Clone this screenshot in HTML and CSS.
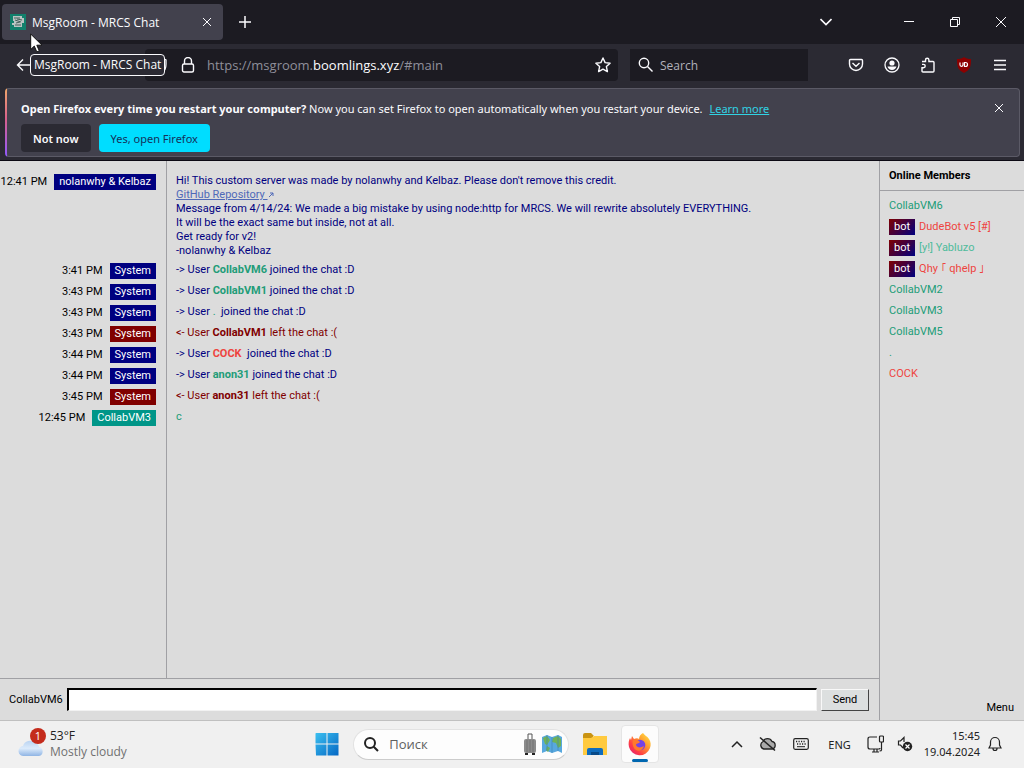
FILE: index.html
```
<!DOCTYPE html>
<html lang="en">
<head>
<meta charset="utf-8">
<title>MsgRoom - MRCS Chat</title>
<link rel="stylesheet" href="styles.css">
</head>
<body>
<div class="desktop">
  <header class="browser">
    <div class="tabs">
      <div class="tab">
        <svg class="favicon" width="16" height="16" viewBox="0 0 16 16"><path fill="#12806c" d="M0 0h16v16H0z"/><path fill="#b9c4c2" d="M3 2h9v2h2v5h-2v4H4v-2H2V9h2V7H3z"/><path d="M4 4h6M5 6l6 2M5 11l6 0M7 5l5 1M6 9l4-1" stroke="#46605c"/></svg>
        <span class="tab-title">MsgRoom - MRCS Chat</span>
        <button class="icon-btn" aria-label="Close tab"><svg width="10" height="10" viewBox="0 0 10 10"><path d="M1 1l8 8M9 1L1 9"/></svg></button>
      </div>
      <button class="icon-btn new-tab" aria-label="New tab"><svg width="12" height="12" viewBox="0 0 12 12"><path d="M6 0v12M0 6h12" stroke-width="1.5"/></svg></button>
      <div class="window-controls">
        <button class="icon-btn list-tabs" aria-label="List all tabs"><svg width="12" height="8" viewBox="0 0 12 8"><path d="M0.500 1l5.500 5.500L11.500 1" stroke-width="1.600"/></svg></button>
        <button class="icon-btn control" aria-label="Minimize"><svg width="10" height="10" viewBox="0 0 10 10"><path d="M0 4.500h10"/></svg></button>
        <button class="icon-btn control" aria-label="Restore"><svg width="10" height="10" viewBox="0 0 10 10"><path d="M.5 2.500h7v7h-7zM2.500 2V.5h7v7H8"/></svg></button>
        <button class="icon-btn control" aria-label="Close window"><svg width="10" height="10" viewBox="0 0 10 10"><path d="M0 0l10 10M10 0L0 10"/></svg></button>
      </div>
    </div>
    <div class="toolbar">
      <button class="icon-btn back" aria-label="Back"><svg width="16" height="14" viewBox="0 0 16 14"><path d="M16 7H1.500M7 1.500L1.500 7 7 12.500" stroke-width="1.400"/></svg></button>
      <div class="address">
        <svg width="14" height="16" viewBox="0 0 14 16"><path d="M7 1l4 2v4c0 4-1 7-4 8-3-1-6-4-6-8V3z" stroke-width="1.300"/></svg>
        <svg width="14" height="16" viewBox="0 0 14 16"><rect x="1.500" y="7" width="11" height="8" rx="1.500" stroke-width="1.400"/><path d="M3.500 7V4a3.500 3.500 0 0 1 7 0v3" stroke-width="1.400"/></svg>
        <span class="url">https://msgroom.<b>boomlings.xyz</b>/#main</span>
        <button class="icon-btn" aria-label="Bookmark"><svg width="16" height="16" viewBox="0 0 16 16"><path d="M8 1l2.100 4.600 5 .6-3.700 3.400 1 5L8 12.100l-4.400 2.500 1-5L.9 6.200l5-.6z" stroke-width="1.400" stroke-linejoin="round"/></svg></button>
      </div>
      <label class="web-search">
        <svg width="16" height="16" viewBox="0 0 16 16"><circle cx="6" cy="6" r="4.700" stroke-width="1.400"/><path d="M9.500 9.500l5 5" stroke-width="1.400"/></svg>
        <input type="text" placeholder="Search" aria-label="Search the web">
      </label>
      <div class="tools">
        <button class="icon-btn" aria-label="Pocket"><svg width="16" height="16" viewBox="0 0 16 16"><path d="M2.500 2.500h11q1 0 1 1V7a6.500 6.500 0 0 1-13 0V3.500q0-1 1-1zM4.500 6L8 9.200 11.500 6" stroke-width="1.400"/></svg></button>
        <button class="icon-btn" aria-label="Account"><svg width="16" height="16" viewBox="0 0 16 16"><circle cx="8" cy="8" r="7" stroke-width="1.300"/><circle cx="8" cy="6" r="2.600" fill="#fbfbfe" stroke="none"/><path d="M3.500 9.500h9A5 5 0 0 1 8 13a5 5 0 0 1-4.500-3.500z" fill="#fbfbfe" stroke="none"/></svg></button>
        <button class="icon-btn" aria-label="Extensions"><svg width="16" height="16" viewBox="0 0 16 16"><path d="M2 4.500h3.500V3a1.700 1.700 0 0 1 3.400 0v1.500H13q1 0 1 1V14q0 1-1 1H3q-1 0-1-1v-3.200h1.500a1.700 1.700 0 0 0 0-3.400H2" stroke-width="1.400"/></svg></button>
        <button class="icon-btn" aria-label="uBlock Origin"><svg width="16" height="16" viewBox="0 0 16 16"><path d="M8 0c2 1.500 4 2 7 2 0 8-1 11-7 14C2 13 1 10 1 2c3 0 5-.5 7-2z" fill="#8c0000" stroke="none"/><path d="M4 5.500v2.300a1.500 1.500 0 0 0 3 0V5.500M8.500 5.500h1a2 2 0 0 1 0 4h-1z" stroke-width="1.200"/></svg></button>
        <button class="icon-btn" aria-label="Application menu"><svg width="12" height="12" viewBox="0 0 12 12"><path d="M0 1.500h12M0 6h12M0 10.500h12" stroke-width="1.300"/></svg></button>
      </div>
    </div>
    <div class="notice">
      <div class="notice-body">
        <p><strong>Open Firefox every time you restart your computer?</strong> Now you can set Firefox to open automatically when you restart your device. <a href="#learn">Learn more</a></p>
        <div class="notice-actions"><button class="btn">Not now</button><button class="btn primary">Yes, open Firefox</button></div>
      </div>
      <button class="icon-btn notice-close" aria-label="Dismiss"><svg width="8" height="8" viewBox="0 0 8 8"><path d="M0 0l8 8M8 0L0 8"/></svg></button>
    </div>
    <div class="tooltip">MsgRoom - MRCS Chat</div>
    <svg class="pointer" width="13" height="20" viewBox="0 0 13 20"><path d="M.7 1v15.500l3.600-3.400 2.500 5.800 2.500-1.100-2.500-5.600h5.200z" fill="#fff" stroke="#111" stroke-width="1"/></svg>
  </header>

  <main class="chat">
    <section class="room">
      <div class="messages">
        <div class="meta"><time>12:41 PM</time><span class="author">nolanwhy &amp; Kelbaz</span></div>
        <div class="text">Hi! This custom server was made by nolanwhy and Kelbaz. Please don't remove this credit.<br><a href="#repo">GitHub Repository <svg width="6" height="6" viewBox="0 0 6 6"><path d="M1 5l4-4M2 1h3v3"/></svg></a><br>Message from 4/14/24: We made a big mistake by using node:http for MRCS. We will rewrite absolutely EVERYTHING.<br>It will be the exact same but inside, not at all.<br>Get ready for v2!<br>-nolanwhy &amp; Kelbaz</div>
        <div class="meta"><time>3:41 PM</time><span class="author">System</span></div>
        <div class="text">-&gt; User <b class="green">CollabVM6</b> joined the chat :D</div>
        <div class="meta"><time>3:43 PM</time><span class="author">System</span></div>
        <div class="text">-&gt; User <b class="green">CollabVM1</b> joined the chat :D</div>
        <div class="meta"><time>3:43 PM</time><span class="author">System</span></div>
        <div class="text">-&gt; User <span class="green">.</span>&nbsp; joined the chat :D</div>
        <div class="meta"><time>3:43 PM</time><span class="author left">System</span></div>
        <div class="text left">&lt;- User <b>CollabVM1</b> left the chat :(</div>
        <div class="meta"><time>3:44 PM</time><span class="author">System</span></div>
        <div class="text">-&gt; User <b class="red">COCK</b>&nbsp; joined the chat :D</div>
        <div class="meta"><time>3:44 PM</time><span class="author">System</span></div>
        <div class="text">-&gt; User <b class="green">anon31</b> joined the chat :D</div>
        <div class="meta"><time>3:45 PM</time><span class="author left">System</span></div>
        <div class="text left">&lt;- User <b>anon31</b> left the chat :(</div>
        <div class="meta"><time>12:45 PM</time><span class="author user">CollabVM3</span></div>
        <div class="text green">c</div>
      </div>
      <form class="composer">
        <label for="message">CollabVM6</label>
        <input id="message" type="text">
        <button type="button">Send</button>
      </form>
    </section>
    <aside class="members">
      <h2>Online Members</h2>
      <ul>
        <li class="green">CollabVM6</li>
        <li class="red"><span class="bot">bot</span>DudeBot v5 [#]</li>
        <li class="mint"><span class="bot">bot</span>[y!] Yabluzo</li>
        <li class="red"><span class="bot">bot</span>Qhy ｢ qhelp ｣</li>
        <li class="green">CollabVM2</li>
        <li class="green">CollabVM3</li>
        <li class="green">CollabVM5</li>
        <li class="green">.</li>
        <li class="red">COCK</li>
      </ul>
      <button class="menu">Menu</button>
    </aside>
  </main>

  <footer class="taskbar">
    <div class="weather">
      <svg width="29" height="30" viewBox="0 0 29 30"><defs><linearGradient id="cl" x2="0" y2="1"><stop stop-color="#b9d3f1"/><stop offset=".5" stop-color="#dcebfb"/><stop offset="1" stop-color="#8fb4e4"/></linearGradient></defs><path d="M6 28a5 5 0 0 1-1-10 7 7 0 0 1 12-3 5 5 0 0 1 4 4 4.600 4.600 0 0 1 0 9z" fill="url(#cl)"/><circle cx="20" cy="8" r="8" fill="#c42b1c"/><text x="20" y="12" class="count">1</text></svg>
      <div class="weather-text"><div>53°F</div><div class="sky">Mostly cloudy</div></div>
    </div>
    <nav class="apps">
      <button class="icon-btn" aria-label="Start"><svg width="24" height="24" viewBox="0 0 24 24"><defs><linearGradient id="wn" x2="1" y2="1"><stop stop-color="#3cc0f0"/><stop offset="1" stop-color="#0467c4"/></linearGradient></defs><path fill="url(#wn)" stroke="none" d="M1 1h10.500v10.500H.5V1.500zM12.500 1h11v10.500h-11zM.5 12.500h11v11H1zM12.500 12.500h11v11h-11z"/></svg></button>
      <label class="task-search">
        <svg class="lens" width="15" height="15" viewBox="0 0 15 15"><circle cx="6" cy="6" r="5"/><path d="M9.700 9.700L14 14"/></svg>
        <input type="text" placeholder="Поиск" aria-label="Поиск">
        <svg width="40" height="22" viewBox="0 0 40 22"><path d="M5 6V1h4v5" fill="none" stroke="#555"/><rect x="1" y="6" width="12" height="14" rx="2" fill="#8c8c8c"/><path d="M4 7v12M7 7v12M10 7v12" stroke="#737373"/><path d="M2 20h3v2H2zM9 20h3v2H9z" fill="#222"/><path d="M19 4l5-2 5 2 6-2 4 2v16l-4-2-6 2-5-2-5 2z" fill="#58a8de"/><path d="M20 5l4-2 3 4-3 5-2-1zM24 13l3 2-2 4-2-2zM30 5l5-2 3 3v7l-3 2-2-5-4-1z" fill="#6fb257"/><path d="M24 2v16M29 4v16M35 2v16" stroke="#3d82b5" stroke-width=".6"/></svg>
      </label>
      <button class="icon-btn" aria-label="File Explorer"><svg width="24" height="22" viewBox="0 0 24 22"><path d="M0 2q0-2 2-2h6l3 3h-1v3H0z" fill="#c99312" stroke="none"/><path d="M0 5h8l3-2h13v19H0z" fill="#ffca3f" stroke="none"/><path d="M4 22v-5q0-2 2-2h12q2 0 2 2v5z" fill="#0f6cbd" stroke="none"/><path d="M8 19h8v3H8z" fill="#084a88" stroke="none"/></svg></button>
      <button class="icon-btn running" aria-label="Firefox"><svg width="24" height="24" viewBox="0 0 24 24"><defs><linearGradient id="fx" x1="1" x2="0" y2="1"><stop stop-color="#fff04b"/><stop offset=".35" stop-color="#ffa02f"/><stop offset=".7" stop-color="#ff3d45"/><stop offset="1" stop-color="#d71887"/></linearGradient></defs><path d="M4 4l2 3c2-1 4-1 5 0 0-3 2-5 4-6 1 2 4 3 6 6 2 3 2 6 1 9a11 11 0 0 1-21-1C0 11 1 8 2 6l1 2z" fill="url(#fx)" stroke="none"/><circle cx="12" cy="13" r="5.300" fill="#7542e5" stroke="none"/><path d="M5 8c3-1 5 0 7 2-1 2-4 1-4 3 1 3 5 3 8 1-1 4-5 6-8 4-3-2-4-6-3-10z" fill="#ff792c" stroke="none"/></svg></button>
    </nav>
    <div class="tray">
      <button class="icon-btn" aria-label="Show hidden icons"><svg width="12" height="8" viewBox="0 0 12 8"><path d="M1 7l5-5 5 5" stroke-width="1.500"/></svg></button>
      <svg width="18" height="16" viewBox="0 0 18 16"><path d="M5 13a4 4 0 0 1-1-7.500 5 5 0 0 1 9 0A3.800 3.800 0 0 1 13 13z" fill="#aaa" stroke-width="1.300"/><path d="M1 1.500l15 13" stroke-width="1.600"/></svg>
      <svg width="16" height="12" viewBox="0 0 16 12"><rect x=".7" y=".7" width="14.600" height="10.600" rx="1.500" stroke-width="1.200"/><path d="M3 3.500h10M4 6h9" stroke-dasharray="1.200 1.300" stroke-width="1.300"/><path d="M4 8.700h8"/></svg>
      <span class="lang">ENG</span>
      <svg width="17" height="18" viewBox="0 0 17 18"><path d="M10 2H3Q1 2 1 4v8q0 2 2 2h9q1 0 1-1M5 17h7M7 14v3M10 14v3M14.500 7v8q0 1-2 1" stroke-width="1.200"/><rect x="12.500" y="1" width="4" height="6" rx="1" stroke-width="1.200"/></svg>
      <svg width="16" height="16" viewBox="0 0 16 16"><path d="M6 12L3.500 9H1.500V5h2L7 1.500V6" stroke-width="1.200"/><circle cx="10.500" cy="10.500" r="4.700" fill="#222" stroke="none"/><path d="M8.500 8.500l4 4M12.500 8.500l-4 4" stroke="#fff" stroke-width="1.200"/></svg>
      <div class="clock"><div>15:45</div><div>19.04.2024</div></div>
      <button class="icon-btn bell" aria-label="Notifications"><svg width="14" height="16" viewBox="0 0 14 16"><path d="M1 12l1.500-3V6a4.500 4.500 0 0 1 9 0v3l1.500 3zM5 12.500a2 2 0 0 0 4 0" stroke-width="1.200"/></svg></button>
    </div>
  </footer>
</div>
</body>
</html>
```
FILE: styles.css
```
* { box-sizing: border-box; }
body { margin: 0; font-family: "Open Sans", "Noto Sans", sans-serif; font-size: 12px; }
button, input { font: inherit; color: inherit; border: 0; padding: 0; background: none; }
input { min-width: 0; outline: 0; }
svg { flex: none; fill: none; stroke: none; }
.desktop { display: flex; flex-direction: column; min-height: 100vh; }

.icon-btn { display: flex; align-items: center; justify-content: center; flex: none; }
.icon-btn svg { stroke: currentColor; }

.browser { position: relative; background: #2b2a33; color: #fbfbfe; border-bottom: 1px solid #0c0a14; }
.tabs { display: flex; align-items: center; height: 44px; padding-left: 2px; background: #1c1b22; }
.tab { display: flex; align-items: center; gap: 6px; width: 221px; height: 36px; padding: 0 11px 0 8px; border-radius: 4px; background: #42414d; }
.tab-title { flex: 1; }
.new-tab { width: 44px; height: 36px; }
.window-controls { display: flex; align-items: center; margin-left: auto; }
.list-tabs { width: 36px; height: 36px; margin-right: 42px; }
.control { width: 46px; height: 44px; }

.toolbar { display: flex; align-items: center; height: 44px; padding: 0 18px 2px 15px; }
.back { width: 18px; height: 32px; }
.address { display: flex; align-items: center; flex: 1; gap: 12px; height: 32px; margin-left: 112px; padding: 0 7px 0 10px; border-radius: 4px; background: #1c1b22; }
.address > svg, .web-search svg { stroke: #fbfbfe; }
.url { flex: 1; color: #8f8f9a; font-size: 13px; }
.url b { color: #fbfbfe; font-weight: 400; }
.web-search { display: flex; align-items: center; gap: 6px; width: 178px; height: 32px; margin-left: 12px; padding-left: 8px; background: #1c1b22; }
.web-search input { width: 120px; }
.web-search input::placeholder { color: #b2b2bb; opacity: 1; }
.tools { display: flex; align-items: center; gap: 20px; margin-left: 40px; }
.tools button:last-child { margin-left: 2px; }

.notice { display: flex; align-items: flex-start; margin: 0 4px 3px 5px; padding: 11px 16px 4px 14px; border: 1px solid transparent; border-left-width: 2px; border-radius: 4px; background: linear-gradient(#42414d, #42414d) padding-box, linear-gradient(90deg, transparent 2px, #5b5a66 2px) border-box, linear-gradient(#f0a86a, #d8608c 45%, #9059ff) border-box; font-family: "Noto Sans", sans-serif; font-size: 11px; }
.notice-body { flex: 1; }
.notice p { margin: 0 0 7px; line-height: 17px; }
.notice a { margin-left: 4px; color: #31d2e4; }
.notice-actions { display: flex; gap: 8px; }
.btn { height: 28px; padding: 0 12px; border-radius: 4px; background: #2b2a33; font-weight: 600; }
.primary { background: #00ddff; color: #15305a; font-weight: 400; }
.notice-close { margin-top: 4px; }
.tooltip { position: absolute; left: 30px; top: 54px; padding: 0 3px; border: 1px solid #fbfbfe; border-radius: 4px; background: #2b2a33; line-height: 20px; }
.pointer { position: absolute; left: 30px; top: 33px; }

.chat { display: flex; flex: 1; background: #dcdcdc; font-family: Roboto, "Liberation Sans", sans-serif; font-size: 11px; line-height: 14px; color: #000; border-bottom: 1px solid #c0c0c0; }
.room { display: flex; flex-direction: column; flex: 1; }
.messages { display: grid; grid-template-columns: 167px 1fr; grid-auto-rows: min-content; row-gap: 5px; flex: 1; padding-top: 13px; background: linear-gradient(#a0a0a4, #a0a0a4) 166px 0 / 1px 100% no-repeat; }
.meta { display: flex; align-items: flex-start; justify-content: flex-end; gap: 7px; min-height: 16px; padding-right: 11px; line-height: 16px; white-space: nowrap; }
.author { padding: 0 5px; background: #000080; color: #fff; }
.author.left { background: #800000; }
.author.user { background: #009688; }
.text { padding-left: 9px; color: #000080; }
.text.left { color: #800000; }
.text a { color: #4f69b8; }
.text a svg { stroke: #4f69b8; }
.green, .text.green { color: #229c78; }
.red { color: #ee4440; }
.mint { color: #4fbb9b; }
.composer { display: flex; align-items: center; gap: 4px; padding: 9px 10px 9px 9px; border-top: 1px solid #a0a0a4; }
.composer input { flex: 1; height: 23px; padding: 0 4px; background: #fff; border: 1px solid #f2f2f2; border-top: 2px solid #000; border-left: 2px solid #000; }
.composer button { width: 48px; height: 22px; background: #dcdfdf; border: 1px solid; border-color: #f8f8f8 #444 #444 #f8f8f8; }
.members { display: flex; flex-direction: column; width: 145px; border-left: 1px solid #a0a0a4; }
.members h2 { margin: 0; padding: 8px 9px 7px; border-bottom: 1px solid #a0a0a4; font-size: 11px; font-weight: 700; }
.members ul { margin: 0; padding: 4px 0 0 9px; list-style: none; }
.members li { display: flex; align-items: center; gap: 4px; height: 21px; white-space: nowrap; }
.bot { padding: 1px 5px; background: linear-gradient(135deg, #800000, #000080); color: #fff; }
.menu { align-self: flex-end; margin: auto 10px 5px 0; }

.taskbar { display: flex; align-items: center; height: 47px; padding: 0 21px 1px 18px; background: #f0f0f0; color: #222; }
.weather { display: flex; align-items: center; flex: 1; gap: 3px; }
.weather > svg { align-self: flex-start; }
.weather-text, .clock { line-height: 16px; }
.sky { color: #707070; }
.count { fill: #fff; font-size: 11px; text-anchor: middle; }
.apps { display: flex; align-items: center; gap: 14px; margin-right: 70px; }
.task-search { display: flex; align-items: center; gap: 10px; width: 216px; height: 31px; padding: 0 5px 0 10px; border: 1px solid #e2e2e2; border-bottom-color: #ccc; border-radius: 16px; background: #fdfdfd; }
.task-search input { flex: 1; font-size: 13px; }
.task-search input::placeholder { color: #606060; opacity: 1; }
.lens { stroke: #222; stroke-width: 2; }
.task-search svg:last-child { stroke: none; }
.running { position: relative; width: 38px; height: 38px; border: 1px solid #e5e5e5; border-radius: 4px; background: #fcfcfc; }
.running::after { content: ""; position: absolute; bottom: 0; left: 10px; width: 16px; height: 3px; border-radius: 2px; background: #0067b0; }
.tray { display: flex; align-items: center; gap: 12px; font-family: "Noto Sans", sans-serif; font-size: 11px; }
.tray svg { stroke: #222; }
.tray > svg, .tray > button { margin: 0 2px; }
.tray > svg:nth-of-type(n+3) { margin: 0 -1px 0 2px; }
.lang { margin: 0 2px 0 5px; }
.clock { text-align: right; }
.tray > .bell { margin: 0 1px 0 -4px; }
```
